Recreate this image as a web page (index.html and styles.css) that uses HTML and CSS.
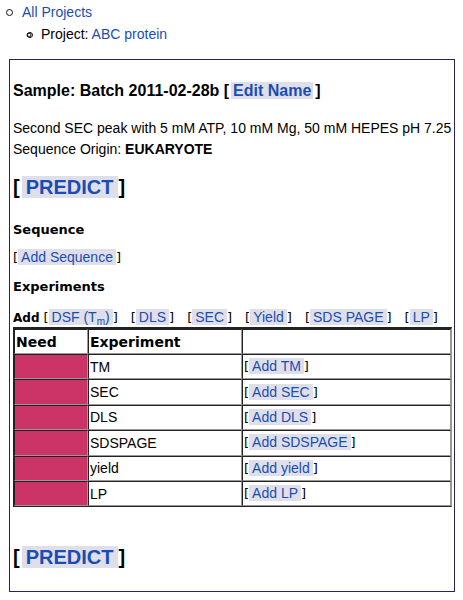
FILE: index.html
```html
<!DOCTYPE html>
<html lang="en">
<head>
    <meta charset="UTF-8">
    <title>Sample: Batch 2011-02-28b</title>
    <link rel="stylesheet" href="styles.css">
</head>
<body>

<ul class="crumbs">
    <li><a href="#">All Projects</a>
        <ul>
            <li>Project: <a href="#">ABC protein</a></li>
        </ul>
    </li>
</ul>

<div class="sample">
    <h2>Sample: Batch 2011-02-28b [<a class="act" href="#">Edit Name</a>]</h2>

    <p class="desc">Second SEC peak with 5 mM ATP, 10 mM Mg, 50 mM HEPES pH 7.25</p>
    <p class="desc">Sequence Origin: <b>EUKARYOTE</b></p>

    <p class="predict">[<a class="act" href="#">PREDICT</a>]</p>

    <h3>Sequence</h3>
    <p class="small seq">[<a class="act" href="#">Add Sequence</a>]</p>

    <h3 class="exp-title">Experiments</h3>
    <p class="small add-row"><b>Add</b>
        <span>[<a class="act" href="#">DSF (T<sub>m</sub>)</a>]</span>
        <span>[<a class="act" href="#">DLS</a>]</span>
        <span>[<a class="act" href="#">SEC</a>]</span>
        <span>[<a class="act" href="#">Yield</a>]</span>
        <span>[<a class="act" href="#">SDS PAGE</a>]</span>
        <span>[<a class="act" href="#">LP</a>]</span>
    </p>

    <table class="exp">
        <thead>
            <tr>
                <th class="need">Need</th>
                <th class="name">Experiment</th>
                <th></th>
            </tr>
        </thead>
        <tbody>
            <tr><td class="need on"></td><td>TM</td><td class="small">[<a class="act" href="#">Add TM</a>]</td></tr>
            <tr><td class="need on"></td><td>SEC</td><td class="small">[<a class="act" href="#">Add SEC</a>]</td></tr>
            <tr><td class="need on"></td><td>DLS</td><td class="small">[<a class="act" href="#">Add DLS</a>]</td></tr>
            <tr><td class="need on"></td><td>SDSPAGE</td><td class="small">[<a class="act" href="#">Add SDSPAGE</a>]</td></tr>
            <tr><td class="need on"></td><td>yield</td><td class="small">[<a class="act" href="#">Add yield</a>]</td></tr>
            <tr><td class="need on"></td><td>LP</td><td class="small">[<a class="act" href="#">Add LP</a>]</td></tr>
        </tbody>
    </table>

    <p class="predict bottom">[<a class="act" href="#">PREDICT</a>]</p>
</div>

</body>
</html>
```

FILE: styles.css
```css
body {
    font-family: "Liberation Sans", Arial, sans-serif;
    font-size: 14px;
    color: #000;
    background-color: #fff;
    margin: 0;
    padding: 4px 8px 0 9px;
}
a {
    color: #1a4db3;
    text-decoration: none;
}
.crumbs {
    list-style: none;
    margin: 0;
    padding-left: 15px;
    line-height: 16px;
}
.crumbs li::before {
    content: "";
    display: inline-block;
    width: 5px;
    height: 5px;
    border: 1.5px solid #111;
    border-radius: 50%;
    margin-left: -18px;
    margin-right: 9px;
    vertical-align: 1px;
}
.crumbs ul {
    margin: 6px 0 0;
    padding-left: 18px;
}
.crumbs ul li::before {
    width: 4px;
    height: 4px;
    margin-left: -15px;
    margin-right: 8px;
}
.sample {
    margin-top: 17px;
    border: 1px solid #2e2160;
    padding: 0 0 0 3px;
    height: 531px;
}
.act {
    background-color: #dfdfe9;
    padding: 0 3px;
}
h2 {
    font-size: 16px;
    margin: 21px 0 0;
    line-height: 20px;
}
h2 .act {
    margin: 0 2px;
    padding: 0 2px;
}
.desc {
    line-height: 21px;
    margin: 0;
    white-space: nowrap;
}
.desc:first-of-type {
    margin-top: 17px;
}
.predict {
    font-weight: bold;
    font-size: 20px;
    line-height: 24px;
    margin: 15px 0 0;
}
.predict .act {
    margin-left: 2px;
    padding: 0 5px 0 4px;
}
h3 {
    font-family: "DejaVu Sans", sans-serif;
    font-size: 13px;
    margin: 23px 0 0;
    line-height: 16px;
}
.small {
    font-family: "DejaVu Sans", sans-serif;
    font-size: 13px;
    line-height: 17px;
}
.small .act {
    font-family: "Liberation Sans", Arial, sans-serif;
    font-size: 14px;
}
.seq {
    margin: 11px 0 0;
}
.exp-title {
    margin-top: 13px;
}
.add-row {
    display: flex;
    align-items: baseline;
    margin: 14px 0 0;
}
.add-row b {
    font-size: 12px;
    margin-right: 4px;
}
.add-row span {
    flex-shrink: 0;
    white-space: nowrap;
    margin-right: 13px;
}
.add-row sub {
    font-size: 10px;
    vertical-align: -3px;
    line-height: 0;
}
.exp {
    width: 439px;
    margin-top: 0;
    border-spacing: 0;
    border: 1px solid #222;
    border-top-width: 2px;
    border-right-color: #999;
}
.exp th, .exp td {
    border-top: 1px solid #222;
    border-left: 1px solid #222;
    border-bottom: 1px solid #999;
    border-right: 1px solid #999;
    padding: 0 1px;
    height: 23.4px;
    text-align: left;
}
.exp th {
    font-family: "DejaVu Sans", sans-serif;
    font-size: 14px;
    height: 23px;
}
.exp .need {
    width: 70px;
}
.exp .name {
    width: 150px;
}
.exp .on {
    background-color: #cc3366;
}
.predict.bottom {
    margin-top: 38px;
}
```
